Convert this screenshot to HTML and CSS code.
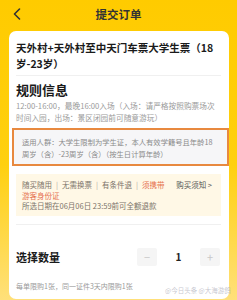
FILE: index.html
```html
<!DOCTYPE html>
<html lang="zh">
<head>
<meta charset="utf-8">
<link rel="stylesheet" href="styles.css">
</head>
<body>
<div class="page">
  <header class="header">
    <div class="back">
      <svg width="8" height="12" viewBox="0 0 8 12"><path d="M6.5 1 L1.5 6 L6.5 11" fill="none" stroke="#333" stroke-width="1.6" stroke-linecap="round" stroke-linejoin="round"/></svg>
    </div>
    <div class="header-title">提交订单</div>
    <div></div>
  </header>
  <main class="card">
    <h1 class="ticket-title">天外村+天外村至中天门车票大学生票（18<br>岁-23岁）</h1>
    <div class="divider"></div>
    <h2 class="rules-title">规则信息</h2>
    <p class="rules-text">12:00-16:00，最晚16:00入场（入场：请严格按照购票场次时间入园，出场：景区闭园前可随意游玩）</p>
    <div class="highlight">适用人群：大学生限制为学生证，本人有效学籍号且年龄18周岁（含）-23周岁（含）（按生日计算年龄）</div>
    <div class="notice">
      <div class="notice-row">
        <div class="notice-tags">随买随用<span class="sep">|</span>无需换票<span class="sep">|</span>有条件退<span class="sep">|</span><span class="warn">须携带<br>游客身份证</span></div>
        <div class="notice-link">购买须知 &gt;</div>
      </div>
      <div class="notice-refund">所选日期在06月06日 23:59前可全额退款</div>
    </div>
    <div class="divider divider-low"></div>
    <div class="qty-row">
      <div class="qty-label">选择数量</div>
      <div class="stepper">
        <div class="step-btn">−</div>
        <div class="step-num">1</div>
        <div class="step-btn">+</div>
      </div>
    </div>
    <p class="limit">每单限购1张，同一证件3天内限购1张</p>
  </main>
  <div class="watermark">@今日头条 @大海游鸽</div>
</div>
</body>
</html>
```
FILE: styles.css
```css
* { box-sizing: border-box; }
html, body { margin: 0; padding: 0; }
body {
  width: 237px;
  height: 300px;
  overflow: hidden;
  font-family: "Noto Sans CJK SC", "Noto Sans", sans-serif;
  color: #222;
}
.page {
  position: relative;
  width: 237px;
  height: 300px;
  background: linear-gradient(180deg, #ffcb00 0%, #ffd00f 55%, #ffe07a 100%);
  overflow: hidden;
}
.header {
  height: 31px;
  display: grid;
  grid-template-columns: 1fr auto 1fr;
  align-items: center;
  padding-bottom: 4px;
}
.back {
  padding-left: 13px;
  display: flex;
  align-items: center;
}
.header-title {
  font-size: 11.5px;
  font-weight: 700;
  color: #333;
}
.card {
  margin: 0 8px 0 9px;
  height: 268px;
  background: #fff;
  border-radius: 7px;
  padding: 9px 8px 0 7px;
}
.ticket-title {
  margin: 0;
  font-size: 10.5px;
  line-height: 16px;
  font-weight: 700;
  color: #1a1a1a;
}
.divider {
  height: 1px;
  background: #f0f0f0;
  margin-top: 3px;
}
.rules-title {
  margin: 5px 0 0;
  font-size: 13px;
  line-height: 18px;
  font-weight: 700;
  color: #1a1a1a;
}
.rules-text {
  margin: 1px 0 0;
  font-size: 7.7px;
  line-height: 12px;
  color: #9a9a9a;
}
.highlight {
  margin: 4px -8px 0 -4px;
  border: 2px solid #e8893f;
  background: #f6f6f8;
  padding: 7px 8px 4px 8px;
  font-size: 7.3px;
  line-height: 11.5px;
  color: #8a8a8a;
}
.notice {
  margin-top: 8px;
  background: #fff8e6;
  padding: 6px 8px 4px 6px;
  font-size: 7.5px;
  line-height: 10.5px;
  color: #7d746a;
}
.notice-row {
  display: flex;
  justify-content: space-between;
}
.sep {
  margin: 0 4px;
  color: #b0a89e;
}
.warn { color: #e5704e; }
.notice-link {
  color: #555;
  padding-right: 1px;
}
.divider-low { margin-top: 8px; }
.qty-row {
  margin-top: 23px;
  height: 18px;
  display: flex;
  align-items: center;
  justify-content: space-between;
}
.qty-label {
  font-size: 11px;
  font-weight: 700;
  color: #1a1a1a;
}
.stepper {
  display: flex;
  align-items: center;
  margin-right: 1px;
}
.step-btn {
  width: 20px;
  height: 18px;
  background: #f5f5f5;
  color: #c8c8c8;
  font-size: 11px;
  line-height: 18px;
  text-align: center;
  border-radius: 2px;
}
.step-num {
  width: 43px;
  text-align: center;
  font-size: 10px;
  font-weight: 700;
  color: #222;
}
.limit {
  margin: 15px 0 0;
  font-size: 7px;
  line-height: 10px;
  color: #9a9a9a;
}
.watermark {
  position: absolute;
  left: 165px;
  top: 286px;
  font-size: 6.5px;
  line-height: 9px;
  color: rgba(190, 190, 200, 0.85);
  white-space: nowrap;
}
```
